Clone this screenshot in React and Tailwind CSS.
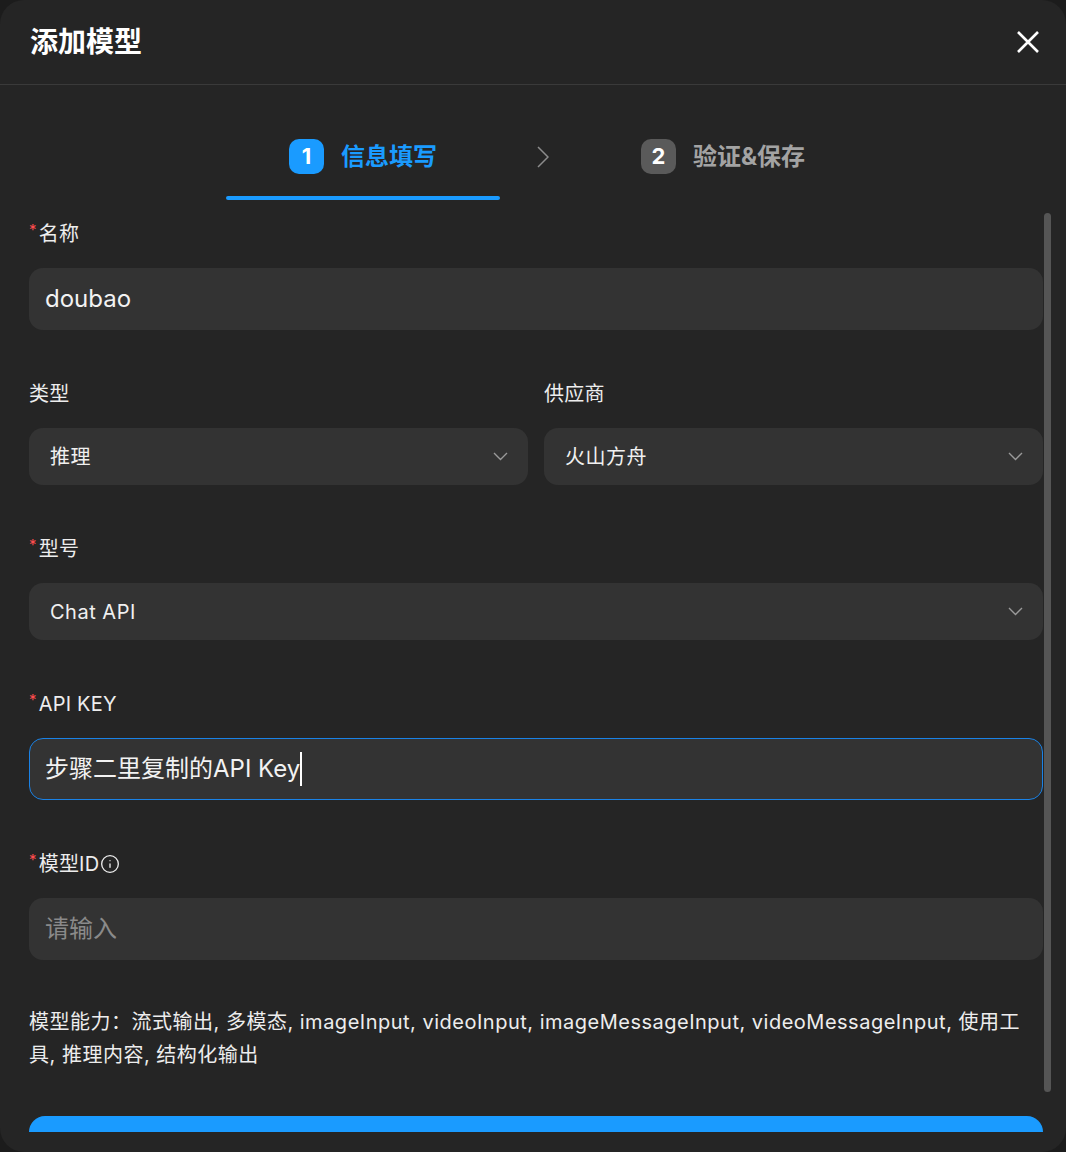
import { Info } from "lucide-react";

const font = { fontFamily: 'Inter, "Noto Sans CJK SC", "Noto Sans", sans-serif' };

const Chevron = () => (
  <svg width="15" height="9" viewBox="0 0 15 9" fill="none">
    <polyline points="1,1 7.5,7.5 14,1" stroke="#9a9a9a" strokeWidth="1.4" />
  </svg>
);

const Label = ({ required, children }) => (
  <div className="h-[28px] mb-[20px] flex items-center text-[20px] text-[#ededed] leading-[28px] tracking-[0.2px]">
    {required && <span className="text-[#ff4d4f] text-[15px] self-start leading-[20px] mr-[2px]">*</span>}
    {children}
  </div>
);

const Select = ({ value, className = "" }) => (
  <div className={`h-[57px] rounded-[14px] bg-[#333333] flex items-center justify-between pl-[21px] pr-[20px] ${className}`}>
    <span className="text-[20px] text-[#f0f0f0] tracking-[0.5px]">{value}</span>
    <Chevron />
  </div>
);

const Step = ({ num, title, active }) => (
  <div className="w-[274px] flex flex-col">
    <div className="h-[35px] flex items-center justify-center gap-[17px]">
      <div
        className={`w-[35px] h-[35px] rounded-[10px] flex items-center justify-center text-white text-[22px] font-bold ${
          active ? "bg-[#1a9bff]" : "bg-[#5a5a5a]"
        }`}
      >
        {num}
      </div>
      <span className={`text-[24px] font-bold ${active ? "text-[#1a9bff]" : "text-[#a3a3a3]"}`}>{title}</span>
    </div>
    <div className={`mt-[22px] h-[4px] rounded-full ${active ? "bg-[#1a9bff]" : "bg-transparent"}`} />
  </div>
);

export default function App() {
  return (
    <div className="w-full h-[1152px] bg-[#1c1c1c] overflow-hidden" style={font}>
      <div className="h-full rounded-[24px] bg-[#252525] flex flex-col overflow-hidden">
        {/* header */}
        <div className="h-[85px] shrink-0 border-b border-[#3a3a3a] flex items-center justify-between pl-[30px] pr-[24px]">
          <h1 className="text-[28px] font-bold text-white">添加模型</h1>
          <button className="w-[28px] h-[28px] flex items-center justify-center">
            <svg width="24" height="24" viewBox="0 0 24 24" fill="none">
              <path d="M2 2L22 22M22 2L2 22" stroke="#ffffff" strokeWidth="2.6" />
            </svg>
          </button>
        </div>

        {/* steps */}
        <div className="shrink-0 pt-[54px] pl-[226px] flex items-start">
          <Step num="1" title="信息填写" active />
          <div className="w-[86px] h-[35px] flex items-center justify-center">
            <svg width="12" height="22" viewBox="0 0 12 22" fill="none">
              <polyline points="1,1 11,11 1,21" stroke="#8c8c8c" strokeWidth="1.5" />
            </svg>
          </div>
          <Step num="2" title="验证&保存" />
        </div>

        {/* form */}
        <div className="flex-1 min-h-0 flex pl-[29px] pr-[15px]">
          <div className="flex-1 min-w-0 overflow-hidden pt-[20px]">
            <Label required>名称</Label>
            <div className="h-[62px] rounded-[14px] bg-[#333333] flex items-center px-[16px] text-[24px] text-[#f2f2f2]">
              doubao
            </div>

            <div className="mt-[50px] flex gap-[16px]">
              <div className="flex-1">
                <Label>类型</Label>
                <Select value="推理" />
              </div>
              <div className="flex-1">
                <Label>供应商</Label>
                <Select value="火山方舟" />
              </div>
            </div>

            <div className="mt-[50px]">
              <Label required>型号</Label>
              <Select value="Chat API" />
            </div>

            <div className="mt-[50px]">
              <Label required>API KEY</Label>
              <div className="h-[62px] rounded-[14px] bg-[#333333] border border-[#1a82e6] flex items-center px-[15px] text-[24px] text-[#f2f2f2]">
                步骤二里复制的API Key
                <span className="w-[2px] h-[34px] bg-white" />
              </div>
            </div>

            <div className="mt-[50px]">
              <Label required>
                模型ID
                <Info size={20} strokeWidth={1.6} className="ml-[1px] text-[#ededed]" />
              </Label>
              <div className="h-[62px] rounded-[14px] bg-[#333333] flex items-center px-[16px] text-[24px] text-[#8a8a8a]">
                请输入
              </div>
            </div>

            <p className="mt-[46px] text-[20px] leading-[33px] tracking-[0.5px] text-[#ededed]">
              模型能力：流式输出, 多模态, imageInput, videoInput, imageMessageInput, videoMessageInput, 使用工具, 推理内容, 结构化输出
            </p>

            <button className="mt-[44px] w-full h-[56px] rounded-[16px] bg-[#1a9bff]" />
          </div>

          {/* scrollbar */}
          <div className="w-[7px] pt-[13px] pb-[40px] ml-[1px]">
            <div className="h-full rounded-full bg-[#555555]" />
          </div>
        </div>

        <div className="h-[20px] shrink-0" />
      </div>
    </div>
  );
}
